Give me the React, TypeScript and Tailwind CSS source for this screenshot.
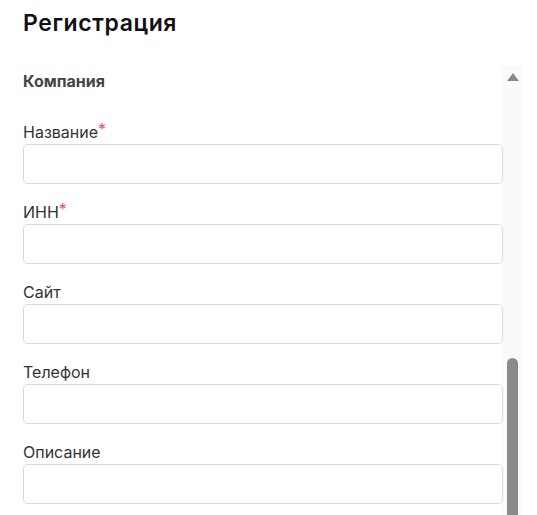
const fields = [
  { label: "Название", required: true },
  { label: "ИНН", required: true },
  { label: "Сайт", required: false },
  { label: "Телефон", required: false },
  { label: "Описание", required: false },
];

export default function App() {
  return (
    <div className="h-[515px] w-[537px] overflow-hidden bg-white pl-[23px] font-['Inter',sans-serif]">
      <h1 className="pt-[9px] text-[23px] font-semibold leading-7 tracking-[0.6px] text-[#111]">Регистрация</h1>

      <div className="mt-[29px] flex">
        {/* form column */}
        <div className="w-[480px] pt-[5px]">
          <div className="text-[16px] font-bold leading-5 text-[#444]">Компания</div>
          <div className="mt-[31px] flex flex-col gap-[18px]">
            {fields.map((f) => (
              <div key={f.label}>
                <label className="block text-[16px] leading-5 text-[#333]">
                  {f.label}
                  {f.required && <span className="relative -top-[3px] text-[#ef4f57]">*</span>}
                </label>
                <input
                  type="text"
                  className="mt-[2px] block h-10 w-full rounded-[5px] border border-[#d3d9e2] bg-white px-3 text-[15px] outline-none"
                />
              </div>
            ))}
          </div>
        </div>

        {/* scrollbar */}
        <div className="flex h-[460px] w-[19px] flex-col items-center bg-[#fafafa]">
          <div className="mt-[7px] h-0 w-0 border-x-[6px] border-b-[8px] border-x-transparent border-b-[#8a8a8a]" />
          <div className="mt-[277px] h-[200px] w-[11px] rounded-t-[6px] bg-[#8a8a8a]" />
        </div>
      </div>
    </div>
  );
}
